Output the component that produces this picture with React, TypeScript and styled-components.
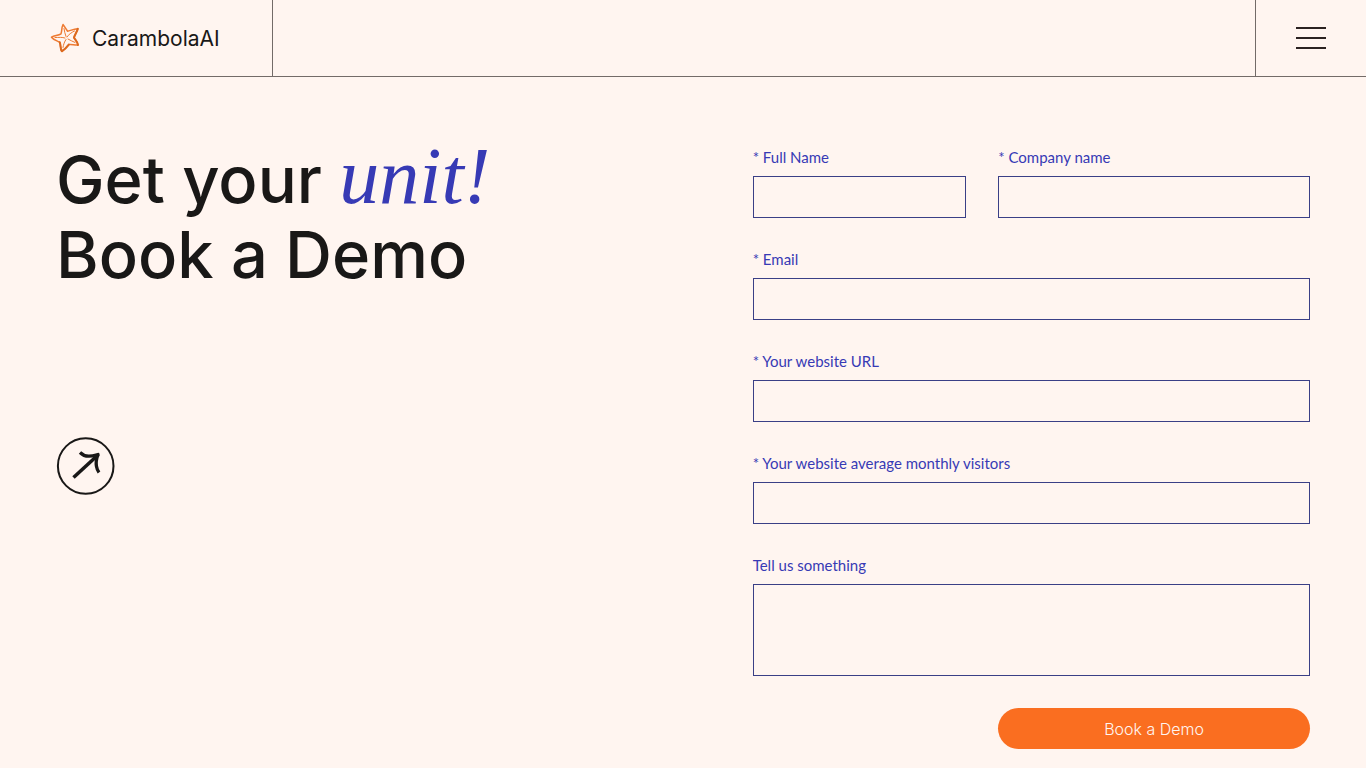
import React from "react";
import styled, { createGlobalStyle } from "styled-components";

const ink = "#191817";
const blue = "#373ab5";

const GlobalStyle = createGlobalStyle`
  *, *::before, *::after { box-sizing: border-box; }
  body {
    margin: 0;
    background: #fff5f0;
    color: ${ink};
    font-family: Inter, "Liberation Sans", sans-serif;
  }
`;

const Header = styled.header`
  display: flex;
  justify-content: space-between;
  height: 77px;
  border-bottom: 1px solid #736b68;
`;

const Brand = styled.a`
  display: flex;
  align-items: center;
  gap: 12px;
  width: 273px;
  padding: 0 0 0 50px;
  border-right: 1px solid #736b68;
  color: ${ink};
  font-size: 21px;
  line-height: 28px;
  text-decoration: none;
`;

const BrandName = styled.span`
  padding-top: 2px;
`;

const MenuButton = styled.button`
  display: flex;
  flex-direction: column;
  align-items: center;
  justify-content: center;
  gap: 8px;
  width: 111px;
  padding: 0;
  border: 0;
  border-left: 1px solid #736b68;
  background: none;
  cursor: pointer;
`;

const MenuBar = styled.span`
  width: 30px;
  height: 2px;
  background: #2b2221;
`;

const Main = styled.main`
  display: grid;
  grid-template-columns: 5fr 4fr;
  padding: 65px 56px 20px;
`;

const Intro = styled.section`
  display: flex;
  flex-direction: column;
  align-items: flex-start;
  gap: 144px;
`;

const Title = styled.h1`
  margin: 0;
  font-size: 65px;
  font-weight: 500;
  line-height: 75px;
`;

const Accent = styled.em`
  color: ${blue};
  font-family: "Liberation Serif", serif;
  font-size: 80px;
  font-weight: 400;
  line-height: 1px;
`;

const Form = styled.form`
  display: grid;
  grid-template-columns: repeat(12, 1fr);
  gap: 32px;
  padding-top: 6px;
`;

const Field = styled.div<{ $span?: number }>`
  grid-column: span ${(p) => p.$span ?? 12};
  display: flex;
  flex-direction: column;
  gap: 10px;
`;

const Label = styled.label`
  color: ${blue};
  font-family: Lato, sans-serif;
  font-size: 15px;
  line-height: 18px;
`;

const Input = styled.input`
  width: 100%;
  height: 42px;
  padding: 0 12px;
  border: 1px solid #3a3f86;
  border-radius: 0;
  background: transparent;
  color: ${ink};
  font: inherit;
`;

const TextArea = styled.textarea`
  width: 100%;
  height: 92px;
  padding: 12px;
  border: 1px solid #3a3f86;
  border-radius: 0;
  background: transparent;
  color: ${ink};
  font: inherit;
  resize: none;
`;

const Submit = styled.button`
  grid-column: 6 / span 7;
  height: 41px;
  padding: 0;
  border: 0;
  border-radius: 21px;
  background: #fa6e20;
  color: #fff5f0;
  font: 300 16px/20px Inter, "Liberation Sans", sans-serif;
  cursor: pointer;
`;

const StarIcon = () => (
  <svg width="30" height="30" viewBox="0 0 30 30" fill="none" stroke="#ee7a32" strokeLinecap="round" strokeLinejoin="round" aria-hidden="true">
    <path d="M13 1.5C14.6 3.5 16.2 6.5 17.6 8.3C21 7.3 25 5.5 27.8 5.7C27.2 8.5 24.5 12 24 14.7C25.5 17 27.6 19 28 22C25 22.5 21.5 21 18.8 21.6C17 24 14.5 26.5 11.8 28.3C10 26 11 22 9.8 19.3C7 17.8 3.5 17 1.5 14.2C4.5 12.5 8.5 12.6 11 10.8C12 8 11.5 4.5 13 1.5Z" strokeWidth="1.5" />
    <path d="M9.8 19.3C10.9 22 10.2 26 11.8 28.3C14.5 26.5 17 24 18.8 21.6M24 14.7C25.5 17 27.6 19 28 22M27.8 5.7C27.2 8.5 24.5 12 24 14.7" stroke="#dc691f" strokeWidth="2" />
    <path d="M14 5.500C14.500 8.500 15 11 16 13.500M24.500 8C21.500 9.500 18.500 11.500 17 14M5 14.500C9 14.500 12 14 15 15M13 24.500C13.500 21.500 14.500 18.500 16 16.500M25 19.500C22.500 18.500 20 17 18 16" strokeWidth="1" />
  </svg>
);

const ArrowIcon = () => (
  <svg width="60" height="60" viewBox="0 0 60 60" fill="none" stroke={ink} strokeLinejoin="round" aria-hidden="true">
    <circle cx="29.7" cy="30" r="27.8" strokeWidth="2" />
    <path d="M17.5 41.500L42.500 18.500" strokeWidth="3.600" />
    <path d="M24 16.500C26.500 19 29.500 20.300 33 20.200C36.500 20.200 39.500 19.200 42 18.500C40.500 22.500 39.800 26.500 40.400 30C40.800 32.500 41.500 34.500 43 36.500" strokeWidth="3.300" />
  </svg>
);

const fields = [
  { id: "name", label: "* Full Name", type: "text", span: 5 },
  { id: "company", label: "* Company name", type: "text", span: 7 },
  { id: "email", label: "* Email", type: "email", span: 12 },
  { id: "website", label: "* Your website URL", type: "url", span: 12 },
  { id: "visitors", label: "* Your website average monthly visitors", type: "text", span: 12 },
];

export default function App() {
  return (
    <>
      <GlobalStyle />
      <Header>
        <Brand href="#">
          <StarIcon />
          <BrandName>CarambolaAI</BrandName>
        </Brand>
        <MenuButton type="button" aria-label="Open menu">
          <MenuBar />
          <MenuBar />
          <MenuBar />
        </MenuButton>
      </Header>
      <Main>
        <Intro>
          <Title>
            Get your <Accent>unit!</Accent>
            <br />
            Book a Demo
          </Title>
          <ArrowIcon />
        </Intro>
        <Form onSubmit={(e) => e.preventDefault()}>
          {fields.map((f) => (
            <Field key={f.id} $span={f.span}>
              <Label htmlFor={f.id}>{f.label}</Label>
              <Input id={f.id} type={f.type} />
            </Field>
          ))}
          <Field>
            <Label htmlFor="message">Tell us something</Label>
            <TextArea id="message" />
          </Field>
          <Submit type="submit">Book a Demo</Submit>
        </Form>
      </Main>
    </>
  );
}
